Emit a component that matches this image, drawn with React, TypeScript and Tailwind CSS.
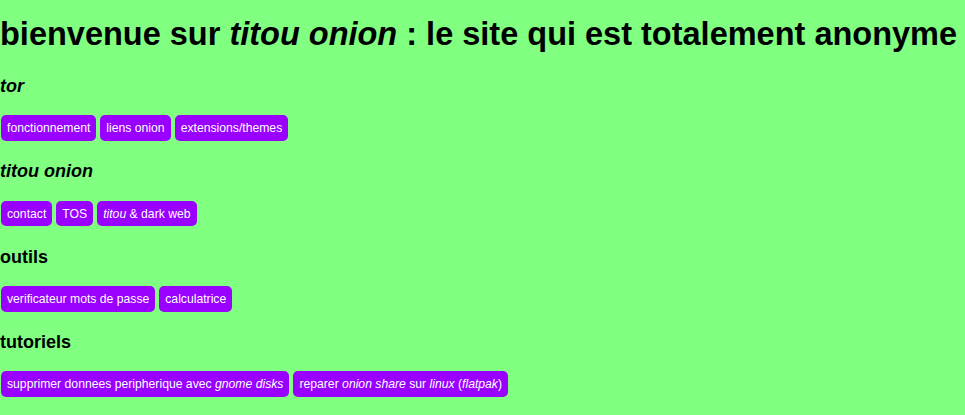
import React from "react";

function Btn({ children }: { children: React.ReactNode }) {
  return (
    <span className="inline-flex items-center h-[25.5px] px-[6px] rounded-[5px] bg-[#9900ff] text-white text-[12.2px] leading-[14px] whitespace-nowrap">
      {children}
    </span>
  );
}

function Row({ children }: { children: React.ReactNode }) {
  return <div className="flex gap-[4px] pl-[1px]">{children}</div>;
}

export default function App() {
  return (
    <div
      className="min-h-screen w-full bg-[#80ff80] text-black"
      style={{ fontFamily: '"Liberation Sans", Arial, sans-serif' }}
    >
      <div className="pt-[16px]">
        <h1 className="text-[32.5px] font-bold leading-[37px] whitespace-nowrap">
          bienvenue sur <i>titou onion</i> : le site qui est totalement anonyme
        </h1>
        <h3 className="mt-[21.5px] mb-[18.5px] text-[18px] leading-[22px] font-bold italic">tor</h3>
        <Row>
          <Btn>fonctionnement</Btn>
          <Btn>liens onion</Btn>
          <Btn>extensions/themes</Btn>
        </Row>
        <h3 className="mt-[19.8px] mb-[18.5px] text-[18px] leading-[22px] font-bold italic">titou onion</h3>
        <Row>
          <Btn>contact</Btn>
          <Btn>TOS</Btn>
          <Btn>
            <i>titou</i>&nbsp;&amp; dark web
          </Btn>
        </Row>
        <h3 className="mt-[19.3px] mb-[18.5px] text-[18px] leading-[22px] font-bold">outils</h3>
        <Row>
          <Btn>verificateur mots de passe</Btn>
          <Btn>calculatrice</Btn>
        </Row>
        <h3 className="mt-[19.3px] mb-[18.5px] text-[18px] leading-[22px] font-bold">tutoriels</h3>
        <Row>
          <Btn>
            supprimer donnees peripherique avec&nbsp;<i>gnome disks</i>
          </Btn>
          <Btn>
            reparer&nbsp;<i>onion share</i>&nbsp;sur&nbsp;<i>linux</i>&nbsp;(<i>flatpak</i>)
          </Btn>
        </Row>
      </div>
    </div>
  );
}
